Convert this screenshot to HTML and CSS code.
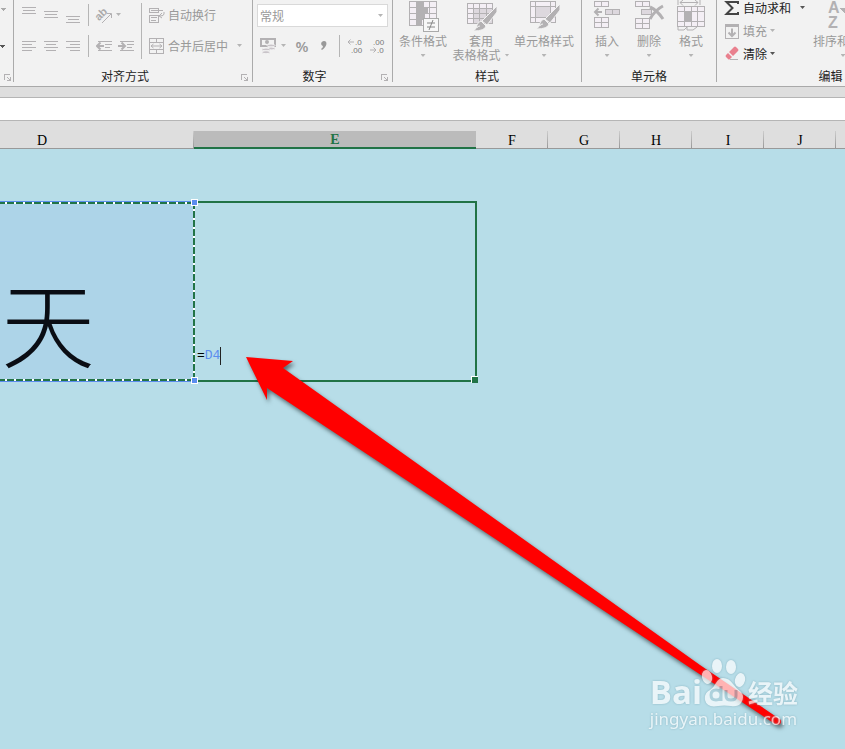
FILE: index.html
```html
<!DOCTYPE html>
<html lang="zh-CN">
<head>
<meta charset="utf-8">
<title>工作表</title>
<link rel="stylesheet" href="styles.css">
</head>
<body>
<header class="ribbon">
  <section class="group group-font">
    <div class="font-tail">
      <svg width="8" height="62" viewBox="0 0 8 62"><path d="M1 8h5l-2.500 3zM0 20l2-4" fill="#aaa" stroke="#aaa"/><path class="down" d="M0 45h5l-2.500 3z"/></svg>
    </div>
    <footer><svg class="launcher" viewBox="0 0 7 7"><path d="M.5 6V.5H6M3 3l3 3M6.500 3v3.500H3"/></svg></footer>
  </section>

  <section class="group group-align">
    <div class="body">
      <div class="stack">
        <div class="row">
          <button class="tool" aria-label="顶端对齐"><svg width="16" height="22" viewBox="0 0 16 22"><path d="M1 3.500h14M2 6.500h12M1 9.500h14"/></svg></button>
          <button class="tool" aria-label="垂直居中"><svg width="16" height="22" viewBox="0 0 16 22"><path d="M1 7.500h14M2 10.500h12M1 13.500h14"/></svg></button>
          <button class="tool" aria-label="底端对齐"><svg width="16" height="22" viewBox="0 0 16 22"><path d="M1 12.500h14M3 15.500h11M1 18.500h14"/></svg></button>
          <i class="sep"></i>
          <button class="tool" aria-label="方向"><svg width="18" height="18" viewBox="0 0 18 18"><text class="ab" x="0" y="12" transform="rotate(-45 6 9)">ab</text><path class="smooth" d="M7 17L16 8M12 7.500h4.500V12"/></svg></button>
          <button class="more" aria-label="更多方向"><i class="caret"></i></button>
        </div>
        <div class="row">
          <button class="tool" aria-label="左对齐"><svg width="16" height="22" viewBox="0 0 16 22"><path d="M1 6.500h14M1 9.500h10M1 12.500h14M1 15.500h10"/></svg></button>
          <button class="tool" aria-label="居中"><svg width="16" height="22" viewBox="0 0 16 22"><path d="M1 6.500h14M3 9.500h10M1 12.500h14M3 15.500h10"/></svg></button>
          <button class="tool" aria-label="右对齐"><svg width="16" height="22" viewBox="0 0 16 22"><path d="M1 6.500h14M5 9.500h10M1 12.500h14M5 15.500h10"/></svg></button>
          <i class="sep"></i>
          <button class="tool" aria-label="减少缩进量"><svg width="16" height="22" viewBox="0 0 16 22"><path d="M2 6.500h14M9 9.500h7M9 12.500h5M2 15.500h14"/><path class="smooth thick" d="M1 11h7M4.500 7.500L1 11l3.500 3.500"/></svg></button>
          <button class="tool" aria-label="增加缩进量"><svg width="16" height="22" viewBox="0 0 16 22"><path d="M2 6.500h14M9 9.500h7M9 12.500h5M2 15.500h14"/><path class="smooth thick" d="M0 11h7M3.500 7.500L7 11l-3.500 3.500"/></svg></button>
        </div>
      </div>
      <i class="sep tall"></i>
      <div class="stack labelled">
        <button class="line"><svg width="16" height="16" viewBox="0 0 16 16"><path d="M.5 1.500h9v4h-9zM2 3.500h12M.5 8.500h9v7h-9zM2 10.500h6M2 13.500h5"/><path class="smooth" d="M15 5v2q0 2-4 2M13 6l-3 3 3 2"/></svg>自动换行</button>
        <button class="line"><svg width="16" height="16" viewBox="0 0 16 16"><path d="M.5 .5h14v15H.5zM.5 4.500h14M.5 11.500h14M7.500 .5v4M7.500 11.500v4"/><path class="smooth" d="M2 8h11M4.500 6L2 8l2.500 2M10.500 6L13 8l-2.500 2"/></svg>合并后居中<i class="caret far"></i></button>
      </div>
    </div>
    <footer><span>对齐方式</span><svg class="launcher" viewBox="0 0 7 7"><path d="M.5 6V.5H6M3 3l3 3M6.500 3v3.500H3"/></svg></footer>
  </section>

  <section class="group group-number">
    <div class="stack">
      <label class="format"><select aria-label="数字格式"><option>常规</option></select><i class="caret"></i></label>
      <div class="row">
        <button class="money" aria-label="会计数字格式"><svg width="17" height="17" viewBox="0 0 17 17"><path d="M1.500 1.500h14v7h-14z" stroke-width="2"/><circle cx="8" cy="5" r="2" fill="#b3b1b3"/><g class="coins"><ellipse cx="12" cy="8.500" rx="4" ry="1.500"/><ellipse cx="12" cy="11.500" rx="4" ry="1.500"/><ellipse cx="7" cy="12.500" rx="4" ry="1.500"/><ellipse cx="7" cy="15.200" rx="4" ry="1.500"/></g></svg><i class="caret"></i></button>
        <button class="tool glyph" aria-label="百分比样式">%</button>
        <button class="tool" aria-label="千位分隔样式"><svg width="8" height="10" viewBox="0 0 8 10"><path class="smooth comma" d="M4 0C8 0 7 6 2 9l-1-1q2-1 2-3C0 4 1 0 4 0z"/></svg></button>
        <i class="sep"></i>
        <button class="tool" aria-label="增加小数位数"><svg width="18" height="18" viewBox="0 0 18 18"><path class="smooth" d="M2 5h6M4.500 2.500L2 5l2.500 2.500"/><text class="digits" x="9" y="8">.0</text><text class="digits" x="5" y="16">.00</text></svg></button>
        <button class="tool" aria-label="减少小数位数"><svg width="18" height="18" viewBox="0 0 18 18"><text class="digits" x="5" y="8">.00</text><path class="smooth" d="M2 13h6M5.500 10.500L8 13l-2.500 2.500"/><text class="digits" x="9" y="16">.0</text></svg></button>
      </div>
    </div>
    <footer><span>数字</span><svg class="launcher" viewBox="0 0 7 7"><path d="M.5 6V.5H6M3 3l3 3M6.500 3v3.500H3"/></svg></footer>
  </section>

  <section class="group group-styles">
    <div class="body">
      <button class="big"><svg width="32" height="32" viewBox="0 0 32 32"><path class="pale" d="M2.500 1.500h27v24h-27z"/><path d="M2.500 7.500h27M2.500 13.500h27M2.500 19.500h27M9.500 1v25M16.500 1v25M22.500 1v25"/><path class="solid" d="M10 2h6v5h-6zM10 8h11v5H10zM10 14h8v5h-8zM10 20h5v5h-5z"/><path class="box" d="M16.500 18.500h15v13h-15z"/><path class="smooth dark" d="M20 23h8M20 27h8M26 20l-4 10"/></svg><span>条件格式</span><i class="caret"></i></button>
      <button class="big wide"><svg width="32" height="32" viewBox="0 0 32 32"><path class="pale" d="M2.500 3.500h25v20h-25z"/><path class="tint" d="M9 9h18v14H9z"/><path d="M2.500 8.500h25M2.500 13.500h25M2.500 18.500h25M8.500 3v21M14.500 3v21M21.500 3v21"/><path class="brush" d="M32 6v6L22 25l-5-4zM16 21l5 5q-1 5-13 5 4-2 4-6 1-3 4-4z"/><path class="smooth spark" d="M12 28q0-2 3-2"/></svg><span>套用</span><span>表格格式<i class="caret"></i></span></button>
      <button class="big wide"><svg width="32" height="32" viewBox="0 0 32 32"><path class="pale" d="M2.500 1.500h25v21h-25z"/><path class="tint" d="M8 7h15v10H8z"/><path d="M2.500 6.500h25M2.500 17.500h25M7.500 1v22M22.500 1v22"/><path class="brush" d="M32 4v6L22 23l-5-4zM16 19l5 5q-1 5-13 5 4-2 4-6 1-3 4-4z"/><path class="smooth spark" d="M12 26q0-2 3-2"/></svg><span>单元格样式</span><i class="caret"></i></button>
    </div>
    <footer><span>样式</span></footer>
  </section>

  <section class="group group-cells">
    <div class="body">
      <button class="big small"><svg width="28" height="32" viewBox="0 0 28 32"><path class="pale" d="M1.500 1.500h14v5h-14zM1.500 17.500h14v10h-14z"/><path d="M8.500 1v6M8.500 17v11M1.500 22.500h14"/><path class="tint edge" d="M12.500 9.500h14v5h-14z"/><path d="M19.500 9v6"/><path class="smooth thick" d="M2 12h7M5.500 8.500L2 12l3.500 3.500"/></svg><span>插入</span><i class="caret"></i></button>
      <button class="big small"><svg width="32" height="32" viewBox="0 0 32 32"><path class="pale" d="M2.500 1.500h14v5h-14zM2.500 18.500h14v10h-14z"/><path d="M9.500 1v6M9.500 18v11M2.500 23.500h14"/><path class="tint edge" d="M8.500 9.500h10v5h-10z"/><path class="smooth cross" d="M17 7q7 3 13 12M30 6q-8 4-13 13"/></svg><span>删除</span><i class="caret"></i></button>
      <button class="big small"><svg width="28" height="32" viewBox="0 0 28 32"><path class="smooth" d="M1 0v5M23 0v5M3 2.500h18M6 0L3 2.500l3 3M18 0l3 2.500-3 3"/><path class="pale" d="M.5 6.500h27v20H.5z"/><path d="M.5 11.500h27M.5 21.500h27M7.500 6v21M14.500 6v21M20.500 6v21"/><path class="solid" d="M8 12h7v9H8z"/><path class="smooth" d="M1 27v3h6l3-3v3h6l4-3"/></svg><span>格式</span><i class="caret"></i></button>
    </div>
    <footer><span>单元格</span></footer>
  </section>

  <section class="group group-edit">
    <div class="body">
      <div class="stack edits">
        <button class="line on"><svg width="16" height="16" viewBox="0 0 16 16"><path class="smooth sigma" d="M14 4V2H2.500l6 6-6 6H14v-2"/></svg>自动求和<i class="caret far"></i></button>
        <button class="line"><svg width="16" height="16" viewBox="0 0 16 16"><path d="M1.500 2.500h13v13h-13z"/><path class="solid" d="M1 1h14v3H1z"/><path class="smooth thick" d="M8 5.500V13M4.500 9.500L8 13l3.500-3.500"/></svg>填充<i class="caret"></i></button>
        <button class="line on"><svg width="16" height="16" viewBox="0 0 16 16"><path class="eraser" d="M10 1q1-1 2 0l2 2q1 1 0 2L9 10 5 6zM4 7l4 4-2 2q-1 1-2 0l-2-2q-1-1 0-2z"/><path d="M6 13.500h8"/></svg>清除<i class="caret"></i></button>
      </div>
      <button class="big sort"><svg width="32" height="32" viewBox="0 0 32 32"><text class="az" x="1" y="13">A</text><text class="az" x="1" y="28">Z</text><path class="solid" d="M13 8h18l-7 8v10l-4-3v-7z"/></svg><span>排序和筛选</span><i class="caret"></i></button>
    </div>
    <footer><span>编辑</span></footer>
  </section>
</header>

<div class="formula-bar"><input type="text" aria-label="编辑栏"></div>

<main class="sheet">
  <table>
    <colgroup><col class="col-d"><col class="col-e"><col class="col"><col class="col"><col class="col"><col class="col"><col class="col"><col class="col"></colgroup>
    <thead>
      <tr><th>D</th><th class="active">E</th><th>F</th><th>G</th><th>H</th><th>I</th><th>J</th><th></th></tr>
    </thead>
    <tbody>
      <tr class="row-3"><td></td><td></td><td></td><td></td><td></td><td></td><td></td><td></td></tr>
      <tr class="row-4">
        <td class="source">天<i class="marquee"></i><i class="grip top"></i><i class="grip bottom"></i></td>
        <td class="editing"><div class="formula"><span>=</span><span class="ref">D4</span><i class="cursor"></i></div><i class="outline"></i></td>
        <td></td><td></td><td></td><td></td><td></td><td></td>
      </tr>
    </tbody>
  </table>
  <svg class="pointer" width="600" height="400" viewBox="230 340 600 400"><path d="M246 357L293 361 283 368 700 665 781 720Q782 726 775 724L267 388V400z"/></svg>
  <div class="watermark">
    <div class="brand"><b>Bai</b>
      <svg width="44" height="50" viewBox="0 0 44 50"><g fill="#fff"><ellipse cx="15" cy="9" rx="5" ry="7"/><ellipse cx="29" cy="10" rx="5" ry="7"/><ellipse cx="5" cy="20" rx="5" ry="7" transform="rotate(-15 5 20)"/><ellipse cx="38" cy="23" rx="5" ry="7" transform="rotate(15 38 23)"/><path d="M21 21q6 0 10 6 3 4 8 8 4 5 0 11-3 4-10 3-7-1-13 0-11 2-13-6-1-7 5-10 4-3 6-7 3-5 7-5z"/></g><path d="M19 29v15M19 38q0-5-5-5t-5 5 5 5 5-5M24 33v6q0 4 5 4t5-4v-6" fill="none" stroke-width="3"/></svg>
      <strong>经验</strong></div>
    <div class="site">jingyan.baidu.com</div>
  </div>
</main>
</body>
</html>
```
FILE: styles.css
```css
* { box-sizing: border-box; }
body {
  margin: 0;
  min-height: 100vh;
  display: flex;
  flex-direction: column;
  overflow: hidden;
  background: #b7dde8;
  font: 12px/14px "Noto Sans CJK SC", sans-serif;
  color: #222;
}
button {
  border: 0;
  padding: 0;
  background: none;
  font: inherit;
  color: #999;
  white-space: nowrap;
}
svg { display: block; flex: none; }

/* Ribbon */
.ribbon {
  display: flex;
  height: 87px;
  overflow: hidden;
  background: #f2f2f2;
  border-bottom: 1px solid #a9a9a9;
}
.group {
  display: flex;
  flex-direction: column;
  flex: none;
  height: 82px;
  border-right: 1px solid #ababab;
}
.group-font { width: 14px; }
.group-align { width: 239px; }
.group-number { width: 140px; }
.group-styles { width: 189px; }
.group-cells { width: 135px; }
.group-edit { width: 228px; }
.body, .font-tail { display: flex; height: 62px; }
.stack { display: flex; flex-direction: column; height: 62px; }
.group-align .body, .group-number .stack { margin-top: -1px; }
.row { display: flex; align-items: center; height: 31px; }
.group-align .row { padding-left: 4px; }
footer {
  display: flex;
  align-items: center;
  justify-content: center;
  height: 14px;
  margin-top: auto;
  margin-bottom: -1px;
}
footer span { flex: 1; text-align: center; }
.launcher {
  width: 7px;
  height: 7px;
  margin: 3px 4px 0 5px;
}
svg path { fill: none; stroke: #b3b1b3; shape-rendering: crispEdges; }
svg .smooth { shape-rendering: auto; }
svg .thick { stroke-width: 2; }
svg .pale { fill: #f4eff5; }
svg .tint { fill: #ddd8de; stroke: none; }
svg .edge { stroke: #b3b1b3; }
svg .solid { fill: #b3b1b3; stroke: none; }
svg .box { fill: #f7f7f7; stroke: #aaa; }
svg .dark { stroke: #888; }
svg .brush { fill: #b3b1b3; stroke: #f2f2f2; shape-rendering: auto; }
svg .spark { stroke: #f2f2f2; }
svg .cross { stroke-width: 3; }
svg .sigma { stroke: #444; stroke-width: 2; }
svg .eraser { fill: #e9808e; stroke: none; shape-rendering: auto; }
svg .comma { fill: #999; stroke: none; }
.font-tail path { fill: #aaa; stroke: none; }
.font-tail .down { fill: #555; }
.coins { fill: #c9c4c9; stroke: #f2f2f2; }
.ab { font: bold 11px "Liberation Sans", sans-serif; fill: #aaa; }
.digits { font: 8px "Liberation Sans", sans-serif; fill: #777; }
.az { font: bold 16px "Liberation Sans", sans-serif; fill: #b3b1b3; }

.tool {
  display: flex;
  align-items: center;
  justify-content: center;
  width: 22px;
  height: 31px;
}
.more { display: flex; padding: 0 1px; }
.sep { width: 1px; height: 22px; margin: 0 4px; background: #b5b5b5; }
.tall { height: 56px; margin: 4px 0 0 4px; }
.caret {
  flex: none;
  width: 5px;
  height: 3px;
  background: #b5b5b5;
  clip-path: polygon(0 0, 100% 0, 50% 100%);
}
.on { color: #222; }
.on .caret { background: #555; }
.labelled { padding-left: 7px; }
.line { display: flex; align-items: center; height: 31px; gap: 3px; }
.line .far { margin-left: 6px; }

/* Number group */
.format {
  display: flex;
  align-items: center;
  height: 23px;
  margin: 5px 4px 3px;
  padding-right: 4px;
  border: 1px solid #d9d9d9;
  background: #fff;
}
.format select {
  flex: 1;
  appearance: none;
  border: 0;
  padding: 0 2px;
  background: none;
  font: inherit;
  color: #999;
}
.group-number .row { padding-left: 6px; }
.money { display: flex; align-items: center; gap: 5px; width: 32px; }
.glyph { font: 600 15px "Open Sans", sans-serif; color: #999; }
.group-number .tool { flex: none; }

/* Large buttons */
.big {
  display: flex;
  flex-direction: column;
  align-items: center;
  width: 54px;
  padding-bottom: 0;
}
.big svg { margin-bottom: 2px; }
.big span { display: flex; align-items: center; gap: 4px; }
.big > .caret { margin-top: 6px; }
.wide { width: 62px; }
.wide + .wide { width: 64px; }
.small { width: 42px; }
.group-styles .body { padding-left: 3px; }
.group-cells .body { padding-left: 4px; }

/* Editing group */
.edits { width: 84px; margin-top: -4px; padding-left: 7px; height: 69px; }
.edits .line { height: 23px; }
.sort { margin-left: 12px; width: 60px; }

/* Formula bar */
.formula-bar { padding-top: 10px; background: #dedede; }
.formula-bar input {
  display: block;
  width: 100%;
  height: 24px;
  border: solid #b5b5b5;
  border-width: 1px 0;
  background: #fff;
}

/* Worksheet */
.sheet { position: relative; flex: 1; overflow: hidden; }
.sheet::before { content: ""; display: block; height: 10px; background: #dedede; }
table {
  table-layout: fixed;
  width: 1018px;
  margin-left: -110px;
  border-collapse: separate;
  border-spacing: 0;
}
.col-d { width: 304px; }
.col-e { width: 282px; }
.col { width: 72px; }
th {
  height: 18px;
  padding: 3px 0 0;
  border-bottom: 1px solid #999;
  background: linear-gradient(#ccc, #999) right / 1px 100% no-repeat #dedede;
  font: 14px/14px "Liberation Serif", serif;
  color: #000;
}
th.active {
  padding-top: 2px;
  border-bottom: 2px solid #217346;
  background: #bbb;
  font-weight: bold;
  color: #217346;
}
td { padding: 0; }
.row-3 td { height: 53px; }
.row-4 td { position: relative; height: 179px; }
.source {
  padding: 0 0 7px 12px;
  vertical-align: bottom;
  text-align: center;
  background: #add4e8;
  font-size: 94px;
  line-height: 108px;
  font-weight: 300;
  color: #0a0d14;
}
.marquee {
  position: absolute;
  inset: -1px -1px -1px 0;
  border: solid #5b8def;
  border-width: 1px 0;
  background:
    repeating-linear-gradient(90deg, #217346 0 7px, #fff 7px 9px) top / 100% 2px no-repeat,
    repeating-linear-gradient(90deg, #217346 0 7px, #fff 7px 9px) bottom / 100% 2px no-repeat,
    repeating-linear-gradient(#217346 0 7px, #fff 7px 9px) right / 2px 100% no-repeat;
}
.grip {
  position: absolute;
  z-index: 1;
  right: -4px;
  width: 7px;
  height: 7px;
  border: 1px solid #fff;
  background: #5b8def;
}
.top { top: -3px; }
.bottom { bottom: -3px; }
.editing { vertical-align: bottom; }
.outline {
  position: absolute;
  inset: -1px -1px -1px 1px;
  border: 2px solid #217346;
  border-left: 0;
}
.outline::after {
  content: "";
  position: absolute;
  right: -3px;
  bottom: -3px;
  width: 6px;
  height: 6px;
  border: solid #fff;
  border-width: 1px 0 0 1px;
  background: #217346;
}
.formula {
  display: flex;
  padding: 0 0 16px 3px;
  font: 13px/18px "Liberation Mono", monospace;
  color: #000;
}
.ref { color: #5b8def; }
.cursor { width: 1px; height: 18px; background: #222; }

/* Annotation and watermark */
.pointer {
  position: absolute;
  top: 219px;
  left: 230px;
  filter: drop-shadow(2px 3px 2px #0008);
}
.pointer path { fill: #f00; stroke: none; shape-rendering: auto; }
.watermark {
  position: absolute;
  right: 47px;
  bottom: 20px;
  color: #fff;
  opacity: .7;
  filter: drop-shadow(0 0 1px #7aa5b3);
}
.brand { display: flex; align-items: flex-end; height: 50px; }
.brand b { font: bold 33px/34px "Open Sans", sans-serif; }
.brand strong { margin-left: 2px; font-size: 25px; line-height: 34px; }
.brand path { shape-rendering: auto; }
.brand g path { fill: #fff; stroke: none; }
.brand svg { margin-bottom: 2px; }
.brand svg > path { stroke: #a9cdd8; }
.site { font: 17px/20px "Noto Sans", sans-serif; }
```
